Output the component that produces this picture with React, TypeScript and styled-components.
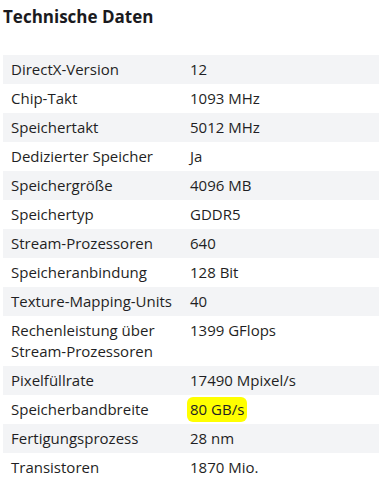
import React from "react";
import styled, { createGlobalStyle } from "styled-components";

const GlobalStyle = createGlobalStyle`
    body {
        margin: 0;
        background: #fff;
        font-family: "Open Sans", "Noto Sans", sans-serif;
        color: #1f1f24;
    }
`;

const specs: { label: string; value: string; mark?: boolean }[] = [
    { label: "DirectX-Version", value: "12" },
    { label: "Chip-Takt", value: "1093 MHz" },
    { label: "Speichertakt", value: "5012 MHz" },
    { label: "Dedizierter Speicher", value: "Ja" },
    { label: "Speichergröße", value: "4096 MB" },
    { label: "Speichertyp", value: "GDDR5" },
    { label: "Stream-Prozessoren", value: "640" },
    { label: "Speicheranbindung", value: "128 Bit" },
    { label: "Texture-Mapping-Units", value: "40" },
    { label: "Rechenleistung über Stream-Prozessoren", value: "1399 GFlops" },
    { label: "Pixelfüllrate", value: "17490 Mpixel/s" },
    { label: "Speicherbandbreite", value: "80 GB/s", mark: true },
    { label: "Fertigungsprozess", value: "28 nm" },
    { label: "Transistoren", value: "1870 Mio." },
];

const App: React.FC = () => {
    return (
        <Page>
            <GlobalStyle />
            <Heading>Technische Daten</Heading>
            <SpecTable>
                <tbody>
                    {specs.map((s, i) => (
                        <Row key={s.label} striped={i % 2 === 0}>
                            <LabelCell>{s.label}</LabelCell>
                            <ValueCell>
                                {s.mark ? <Marker>{s.value}</Marker> : s.value}
                            </ValueCell>
                        </Row>
                    ))}
                </tbody>
            </SpecTable>
        </Page>
    );
};

export default App;

const Page = styled.div`
    padding: 6px 0 0 3px;
`;

const Heading = styled.h2`
    margin: 0 0 27px;
    font-size: 17px;
    font-weight: 700;
    line-height: 22px;
    color: #1a1a20;
`;

const SpecTable = styled.table`
    width: 390px;
    border-collapse: collapse;
    font-size: 15px;
    line-height: 21px;
`;

const Row = styled.tr<{ striped: boolean }>`
    background: ${({ striped }) => (striped ? "#f3f4f6" : "#fff")};
`;

const LabelCell = styled.td`
    width: 163px;
    padding: 4px 8px;
    vertical-align: top;
`;

const ValueCell = styled.td`
    padding: 4px 8px;
    vertical-align: top;
`;

const Marker = styled.span`
    background: #ffff00;
    border-radius: 6px;
    padding: 2px 3px 3px;
    margin: 0 -3px;
`;
